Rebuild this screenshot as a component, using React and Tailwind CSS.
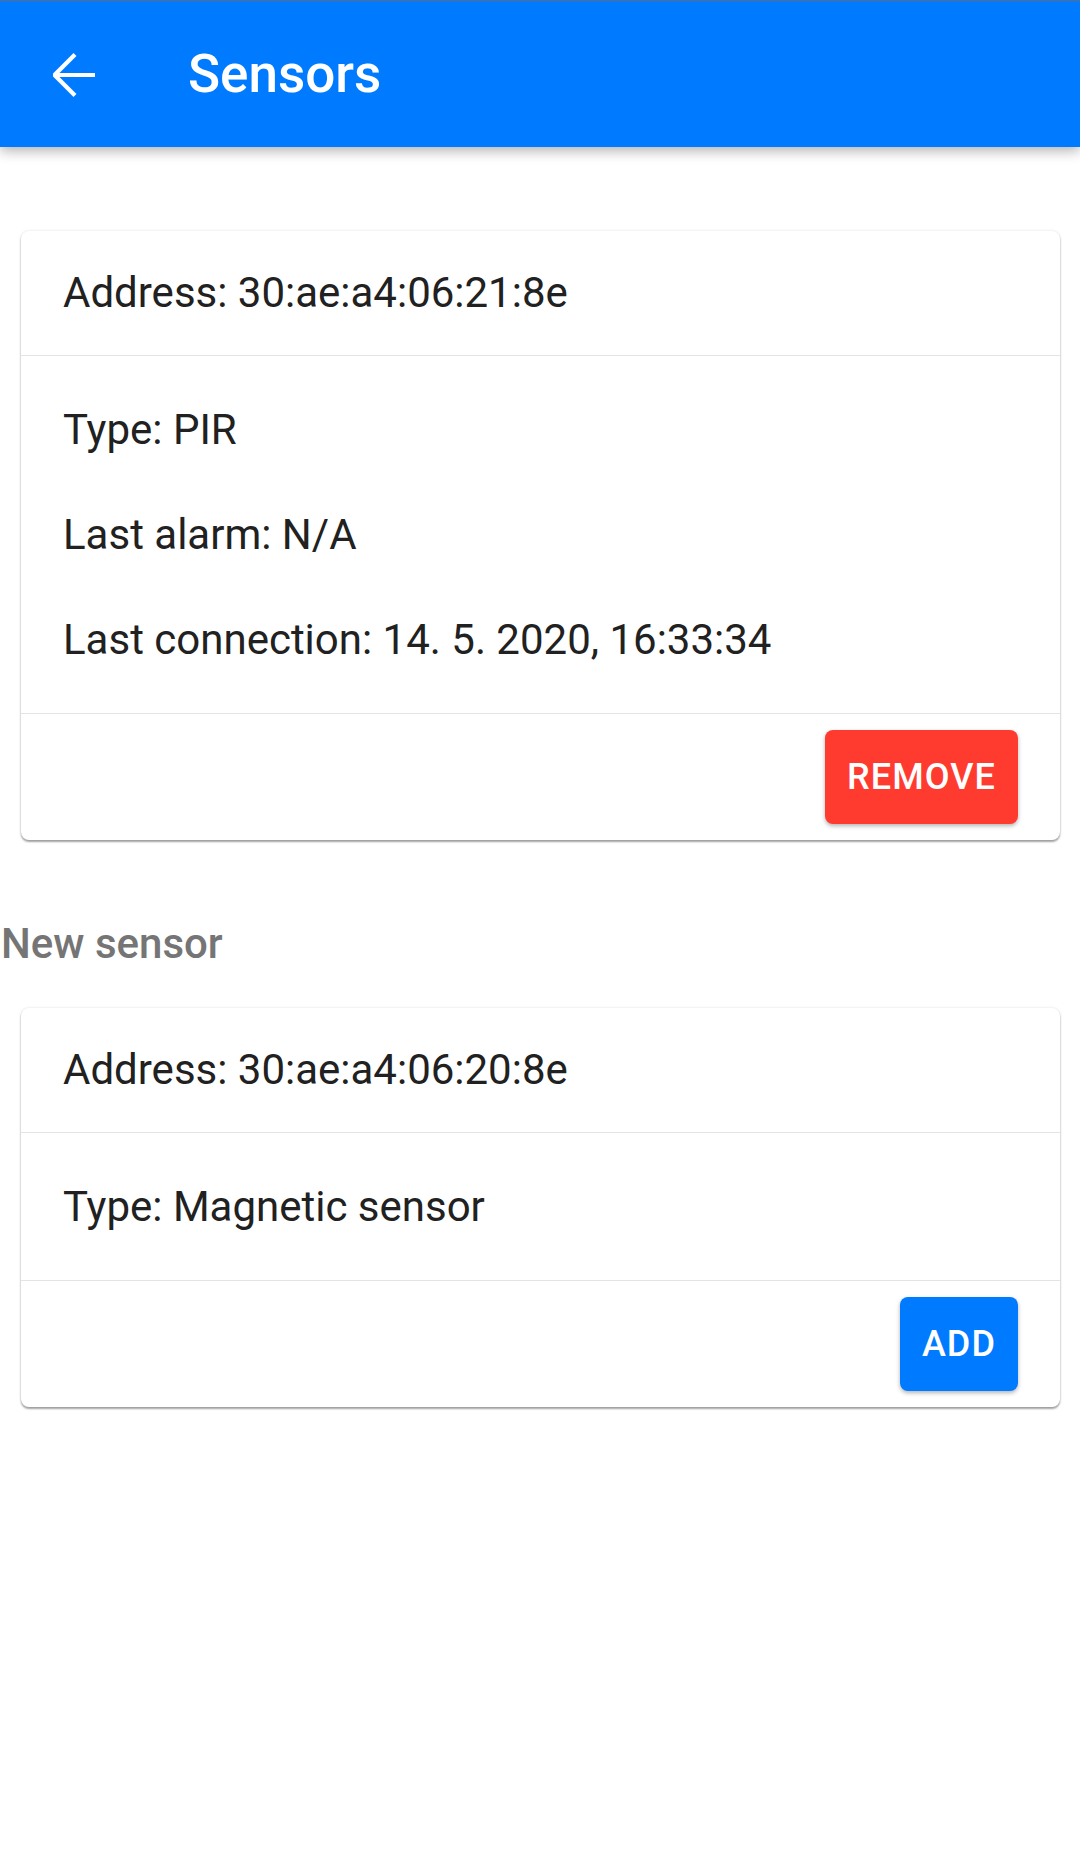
import React from "react";

const font = { fontFamily: "Roboto, 'Noto Sans', sans-serif" };

const BackArrow = () => (
  <svg width="48" height="46" viewBox="0 0 48 46" fill="none">
    <path
      d="M5 23H45M25 2.5L4.5 23L25 43.5"
      stroke="white"
      strokeWidth="4.2"
      strokeLinecap="butt"
      strokeLinejoin="bevel"
    />
  </svg>
);

const SensorCard = ({ address, lines, action }) => (
  <div className="ml-[21px] mr-[20px] rounded-[8px] bg-white shadow-[0_2px_2px_rgba(0,0,0,0.35),0_0_3px_rgba(0,0,0,0.12)]">
    <div className="h-[125px] flex items-center px-[42px] border-b border-[#e4e4e4]">
      <p className="text-[42px] text-[#212121] leading-[50px]">Address: {address}</p>
    </div>
    <div className="py-[21px] px-[42px] border-b border-[#e4e4e4]">
      {lines.map((l) => (
        <p key={l} className="text-[42px] text-[#212121] leading-[105px]">
          {l}
        </p>
      ))}
    </div>
    <div className="flex justify-end py-[16px] pr-[42px]">{action}</div>
  </div>
);

const Button = ({ children, color }) => (
  <button
    className={`h-[94px] px-[22px] rounded-[8px] text-white text-[36px] font-medium tracking-[0.03em] shadow-[0_2px_4px_rgba(0,0,0,0.3)] ${color}`}
  >
    {children}
  </button>
);

export default function App() {
  return (
    <div className="w-[1080px] h-[1857px] bg-white" style={font}>
      <header className="h-[147px] bg-[#007bff] flex items-center shadow-[0_4px_12px_rgba(0,0,0,0.3)] relative border-t-2 border-[#2f74c4]">
        <div className="ml-[50px] flex items-center">
          <BackArrow />
        </div>
        <h1 className="ml-[90px] text-white text-[53px] font-medium">Sensors</h1>
      </header>

      <div className="pt-[84px]">
        <SensorCard
          address="30:ae:a4:06:21:8e"
          lines={["Type: PIR", "Last alarm: N/A", "Last connection: 14. 5. 2020, 16:33:34"]}
          action={<Button color="bg-[#ff3b30]">REMOVE</Button>}
        />

        <p className="mt-[79px] mb-[39px] pl-[1px] text-[42px] leading-[50px] font-medium text-[#757575]">
          New sensor
        </p>

        <SensorCard
          address="30:ae:a4:06:20:8e"
          lines={["Type: Magnetic sensor"]}
          action={<Button color="bg-[#007bff]">ADD</Button>}
        />
      </div>
    </div>
  );
}
